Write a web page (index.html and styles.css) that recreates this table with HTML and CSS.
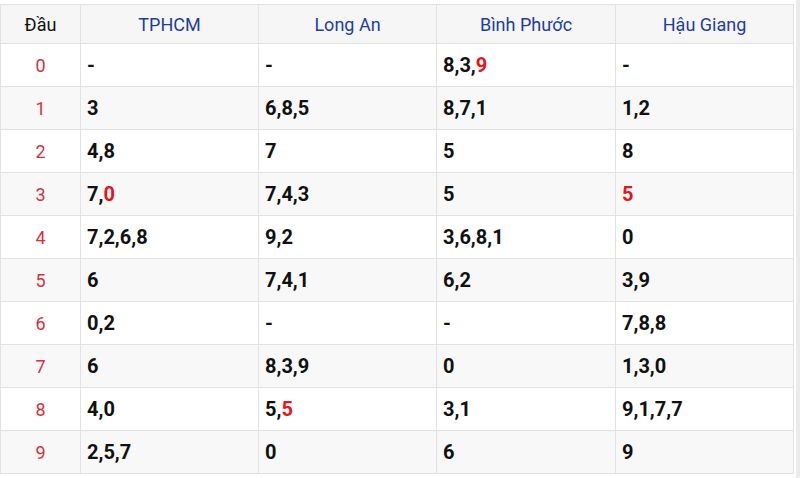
FILE: index.html
```html
<!DOCTYPE html>
<html lang="vi">
<head>
<meta charset="utf-8">
<link rel="stylesheet" href="styles.css">
</head>
<body>
<div class="page">
  <table class="loto">
    <colgroup>
      <col class="c-head"><col class="c-prov"><col class="c-prov"><col class="c-prov3"><col class="c-prov">
    </colgroup>
    <thead>
      <tr><th class="dau">Đầu</th><th>TPHCM</th><th>Long An</th><th>Bình Phước</th><th>Hậu Giang</th></tr>
    </thead>
    <tbody>
      <tr><td class="num">0</td><td>-</td><td>-</td><td>8,3,<span class="hl">9</span></td><td>-</td></tr>
      <tr><td class="num">1</td><td>3</td><td>6,8,5</td><td>8,7,1</td><td>1,2</td></tr>
      <tr><td class="num">2</td><td>4,8</td><td>7</td><td>5</td><td>8</td></tr>
      <tr><td class="num">3</td><td>7,<span class="hl">0</span></td><td>7,4,3</td><td>5</td><td><span class="hl">5</span></td></tr>
      <tr><td class="num">4</td><td>7,2,6,8</td><td>9,2</td><td>3,6,8,1</td><td>0</td></tr>
      <tr><td class="num">5</td><td>6</td><td>7,4,1</td><td>6,2</td><td>3,9</td></tr>
      <tr><td class="num">6</td><td>0,2</td><td>-</td><td>-</td><td>7,8,8</td></tr>
      <tr><td class="num">7</td><td>6</td><td>8,3,9</td><td>0</td><td>1,3,0</td></tr>
      <tr><td class="num">8</td><td>4,0</td><td>5,<span class="hl">5</span></td><td>3,1</td><td>9,1,7,7</td></tr>
      <tr><td class="num">9</td><td>2,5,7</td><td>0</td><td>6</td><td>9</td></tr>
    </tbody>
  </table>
  <div class="edge"></div>
</div>
</body>
</html>
```
FILE: styles.css
```css
html, body {
  margin: 0;
  padding: 0;
  background: #fff;
}
body {
  font-family: Roboto, "Liberation Sans", Arial, sans-serif;
  width: 800px;
  height: 478px;
  overflow: hidden;
}
.page {
  display: flex;
  height: 478px;
}
.loto {
  margin-top: 4px;
  width: 794px;
  border-collapse: collapse;
  table-layout: fixed;
  align-self: flex-start;
}
.c-head { width: 80px; }
.c-prov { width: 178px; }
.c-prov3 { width: 179px; }
.loto th, .loto td {
  border: 1px solid #e2e2e2;
  padding: 0 6px;
  vertical-align: middle;
}
.loto thead th {
  height: 38px;
  background: #f6f6f6;
  font-weight: 400;
  font-size: 18px;
  color: #1d3da6;
  text-align: center;
}
.loto thead th.dau {
  color: #111;
}
.loto tbody td {
  height: 42px;
  font-size: 20px;
  font-weight: 700;
  color: #111;
  text-align: left;
}
.loto tbody tr:nth-child(even) td {
  background: #f8f8f8;
}
.loto tbody td.num {
  text-align: center;
  font-weight: 400;
  font-size: 18px;
  color: #d7303a;
}
.hl {
  color: #e8141c;
}
.edge {
  margin-left: 2px;
  width: 4px;
  height: 478px;
  background: #ebebeb;
}
```
